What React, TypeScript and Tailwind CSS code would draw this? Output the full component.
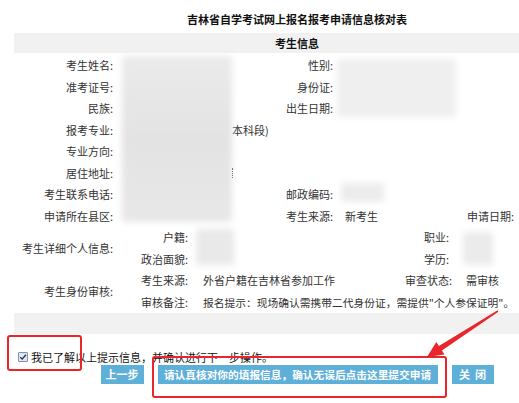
import type { ReactNode } from 'react';

type TopRow = [string, ReactNode, string, ReactNode, string];

const TOP_ROWS: TopRow[] = [
  ['考生姓名:', '', '性别:', '', ''],
  ['准考证号:', '', '身份证:', '', ''],
  ['民族:', '', '出生日期:', '', ''],
  ['报考专业:', <span className="ml-[119px]">本科段)</span>, '', '', ''],
  ['专业方向:', '', '', '', ''],
  ['居住地址:', '', '', '', ''],
  ['考生联系电话:', '', '邮政编码:', '', ''],
  ['申请所在县区:', '', '考生来源:', '新考生', '申请日期:'],
];

const cell = 'h-[21.5px] leading-[21.5px] whitespace-nowrap';

function Blur({ className }: { className: string }) {
  // masked values in the screenshot
  return <div className={`absolute blur-[3px] rounded-[2px] ${className}`} />;
}

function CheckBox() {
  return (
    <span className="w-[10px] h-[10px] border border-[#7f93b0] bg-[#dfe7f2] rounded-[1px] flex items-center justify-center">
      <svg viewBox="0 0 10 10" className="w-[8px] h-[8px]">
        <path d="M1.5 5.2 L4 7.6 L8.6 2.2" fill="none" stroke="#2a2f3a" strokeWidth="1.6" />
      </svg>
    </span>
  );
}

export default function App() {
  return (
    <div className="relative w-[519px] h-[403px] overflow-hidden bg-white text-[#333] text-[11px] font-['Noto_Sans_CJK_SC','Noto_Sans',sans-serif]">
      <div className="ml-[14px] w-[566px]">
        {/* 标题 */}
        <div className="h-[33px] pt-[12px] leading-[14px] text-center font-bold text-[#111]">
          吉林省自学考试网上报名报考申请信息核对表
        </div>
        <div className="h-[20px] leading-[20px] bg-[#f1f1f1] text-center font-bold text-[#111]">考生信息</div>

        {/* 基本信息 */}
        <div className="mt-[2px] grid grid-cols-[99px_170px_50px_134px_47px_1fr]">
          {TOP_ROWS.map((r, i) => (
            <div key={i} className="contents">
              <div className={`${cell} text-right`}>{r[0]}</div>
              <div className={cell}>{r[1]}</div>
              <div className={`${cell} text-right`}>{r[2]}</div>
              <div className={`${cell} pl-[12px]`}>{r[3]}</div>
              <div className={`${cell} text-right`}>{r[4]}</div>
              <div className={cell} />
            </div>
          ))}
        </div>

        {/* 详细信息 / 审核 */}
        <div className="grid grid-cols-[99px_75px_204px_60px_1fr]">
          <div className="row-span-2 flex items-center justify-end">考生详细个人信息:</div>
          <div className={`${cell} text-right`}>户籍:</div>
          <div className={cell} />
          <div className={`${cell} text-right pr-[3px]`}>职业:</div>
          <div className={cell} />

          <div className={`${cell} text-right`}>政治面貌:</div>
          <div className={cell} />
          <div className={`${cell} text-right pr-[3px]`}>学历:</div>
          <div className={cell} />

          <div className="row-span-2 flex items-center justify-end">考生身份审核:</div>
          <div className={`${cell} text-right`}>考生来源:</div>
          <div className={`${cell} pl-[15px]`}>外省户籍在吉林省参加工作</div>
          <div className={`${cell} text-right`}>审查状态:</div>
          <div className={`${cell} pl-[14px]`}>需审核</div>

          <div className={`${cell} text-right`}>审核备注:</div>
          <div className={`${cell} col-span-3 pl-[15px] text-[10.75px]`}>报名提示：现场确认需携带二代身份证，需提供"个人参保证明"。</div>
        </div>

        <div className="h-[21px] bg-[#f1f1f1]" />
      </div>

      {/* 确认 */}
      <div className="mt-[16px] pl-[18px] h-[14px] flex items-center gap-[3px] text-[#111]">
        <CheckBox />
        <span className="leading-[14px]">我已了解以上提示信息，并确认进行下一步操作。</span>
      </div>
      <div className="mt-[1px] ml-[14px] w-[566px] flex justify-center gap-[14px]">
        <button className="w-[43px] h-[19px] bg-[#5eb0d9] text-white font-bold leading-[19px]">上一步</button>
        <button className="w-[280px] h-[19px] bg-[#5eb0d9] text-white font-bold text-[10.7px] leading-[19px] whitespace-nowrap">
          请认真核对你的填报信息，确认无误后点击这里提交申请
        </button>
        <button className="w-[42px] h-[19px] bg-[#5eb0d9] text-white font-bold leading-[19px] whitespace-pre">关  闭</button>
      </div>

      {/* 打码 */}
      <Blur className="left-[122px] top-[56px] w-[110px] h-[166px] bg-gradient-to-b from-[#ebebeb] via-[#e3e3e3] to-[#e8e8e8]" />
      <Blur className="left-[337px] top-[59px] w-[119px] h-[58px] bg-[#efefef]" />
      <Blur className="left-[341px] top-[183px] w-[43px] h-[19px] bg-[#ececec]" />
      <Blur className="left-[196px] top-[229px] w-[38px] h-[36px] bg-[#e9e9e9]" />
      <Blur className="left-[463px] top-[232px] w-[30px] h-[33px] bg-[#ebebeb]" />
      <div className="absolute left-[232px] top-[168px] h-[10px] border-l border-dotted border-[#777]" />

      {/* 标注 */}
      <div className="absolute left-[7px] top-[335px] w-[75px] h-[36px] border-2 border-[#e8262c] rounded-[3px]" />
      <div className="absolute left-[152px] top-[356px] w-[295px] h-[42px] border-2 border-[#e8262c] rounded-[3px]" />
      <svg className="absolute left-0 top-0 w-[519px] h-[403px] pointer-events-none" viewBox="0 0 519 403">
        <polygon
          fill="#e8262c"
          points="498.4,311.7 441.9,350.6 444.5,354.6 427,357 436.3,342 438.9,346 497.6,310.3"
        />
      </svg>
    </div>
  );
}
